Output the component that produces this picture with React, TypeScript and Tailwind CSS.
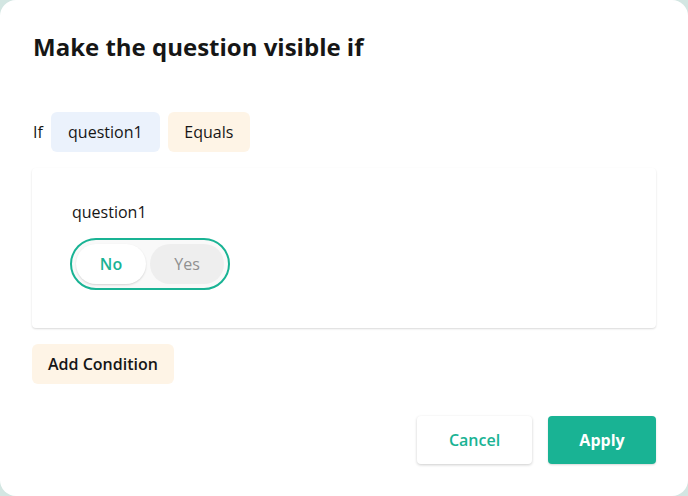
import React from "react";

export default function App() {
  return (
    <div className="w-[688px] h-[496px] bg-[#d3e6e2] overflow-hidden" style={{ fontFamily: '"Open Sans", sans-serif' }}>
      <div className="w-[688px] h-[496px] bg-white rounded-[16px] flex flex-col px-[32px] pt-[31px] text-[#161616]">
        <h1 className="text-[24px] leading-[32px] font-bold pl-[1px]">Make the question visible if</h1>
        <div className="flex items-center mt-[49px] h-[40px]">
          <span className="text-[16px] pl-[1px] mr-[8px]">If</span>
          <div className="w-[109px] h-[40px] flex items-center justify-center rounded-[6px] bg-[#ebf2fc] text-[16px]">question1</div>
          <div className="w-[82px] h-[40px] ml-[8px] flex items-center justify-center rounded-[6px] bg-[#fef4e6] text-[16px]">Equals</div>
        </div>
        <div className="mt-[16px] h-[160px] rounded-[4px] bg-white shadow-[0_1px_2px_rgba(0,0,0,0.15)] px-[40px] pt-[33px]">
          <div className="text-[16px] leading-[22px]">question1</div>
          <div className="mt-[15px] inline-flex items-center gap-[4px] h-[52px] p-[4px] rounded-full border-2 border-[#19b394] bg-[#f9f9f9] -ml-[2px]">
            <div className="w-[70px] h-[40px] rounded-full bg-white shadow-[0_1px_2px_rgba(0,0,0,0.15)] flex items-center justify-center text-[16px] font-semibold text-[#19b394]">No</div>
            <div className="w-[74px] h-[40px] rounded-full bg-[#eeeeee] flex items-center justify-center text-[16px] text-[#909090]">Yes</div>
          </div>
        </div>
        <div className="mt-[16px]">
          <div className="inline-flex h-[40px] px-[16px] items-center rounded-[6px] bg-[#fef4e6] text-[16px] font-semibold">Add Condition</div>
        </div>
        <div className="mt-[32px] flex justify-end gap-[16px]">
          <div className="w-[115px] h-[48px] rounded-[4px] bg-white shadow-[0_1px_3px_rgba(0,0,0,0.2)] flex items-center justify-center text-[16px] font-semibold text-[#19b394]">Cancel</div>
          <div className="w-[108px] h-[48px] rounded-[4px] bg-[#19b394] shadow-[0_1px_2px_rgba(0,0,0,0.15)] flex items-center justify-center text-[16px] font-bold text-white">Apply</div>
        </div>
      </div>
    </div>
  );
}
